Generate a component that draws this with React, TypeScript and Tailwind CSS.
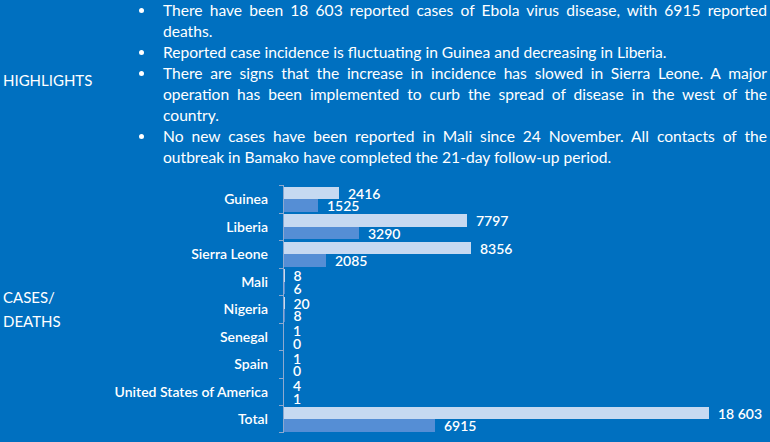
const highlights: string[][] = [
  [
    "There have been 18 603 reported cases of Ebola virus disease, with 6915 reported",
    "deaths.",
  ],
  ["Reported case incidence is fluctuating in Guinea and decreasing in Liberia."],
  [
    "There are signs that the increase in incidence has slowed in Sierra Leone. A major",
    "operation has been implemented to curb the spread of disease in the west of the",
    "country.",
  ],
  [
    "No new cases have been reported in Mali since 24 November. All contacts of the",
    "outbreak in Bamako have completed the 21-day follow-up period.",
  ],
];

// bar lengths in px as drawn in the original chart
const rows = [
  { name: "Guinea", cases: 2416, deaths: 1525, cw: 55, dw: 34 },
  { name: "Liberia", cases: 7797, deaths: 3290, cw: 183, dw: 75 },
  { name: "Sierra Leone", cases: 8356, deaths: 2085, cw: 187, dw: 42 },
  { name: "Mali", cases: 8, deaths: 6, cw: 0.5, dw: 0.5 },
  { name: "Nigeria", cases: 20, deaths: 8, cw: 0.5, dw: 0.5 },
  { name: "Senegal", cases: 1, deaths: 0, cw: 0, dw: 0 },
  { name: "Spain", cases: 1, deaths: 0, cw: 0, dw: 0 },
  { name: "United States of America", cases: 4, deaths: 1, cw: 0, dw: 0 },
  { name: "Total", cases: 18603, deaths: 6915, cw: 425, dw: 151 },
];

function fmt(n: number) {
  return n >= 10000 ? n.toLocaleString("en-US").replace(",", " ") : String(n);
}

function Bar({ value, width, light }: { value: number; width: number; light?: boolean }) {
  return (
    <div className="flex h-[12.5px] items-center">
      <div
        className={light ? "h-full bg-[#c6d9f1]" : "h-full bg-[#558ed5]"}
        style={{ width }}
      />
      <span className="ml-[9px] pt-[2px] text-[14px] font-semibold leading-[12px] text-white">
        {fmt(value)}
      </span>
    </div>
  );
}

export default function App() {
  return (
    <div
      className="h-[442px] w-[770px] overflow-hidden bg-[#0070c0] text-white"
      style={{ fontFamily: 'Lato, "Liberation Sans", sans-serif' }}
    >
      <div className="flex h-[168px]">
        <div className="w-[139px] pl-[3px] pt-[70px] text-[15px] leading-[21px]">HIGHLIGHTS</div>
        <ul className="w-[628px] text-[15.6px] leading-[21px]">
          {highlights.map((lines, i) => (
            <li key={i} className="flex">
              <div className="w-[24px] shrink-0 pt-[8px]">
                <div className="h-[5px] w-[5px] rounded-full bg-white" />
              </div>
              <div className="flex-1">
                {lines.map((line, j) => (
                  <div
                    key={j}
                    className={
                      j < lines.length - 1 ? "text-justify [text-align-last:justify]" : "text-left"
                    }
                  >
                    {line}
                  </div>
                ))}
              </div>
            </li>
          ))}
        </ul>
      </div>

      <div className="mt-[17px] flex">
        <div className="flex w-[100px] items-center pl-[3px] text-[15px] leading-[24px]">
          <div>
            CASES/
            <br />
            DEATHS
          </div>
        </div>
        <div>
          {rows.map((r, i) => (
            <div key={r.name} className="flex h-[27.5px]">
              <div className="mr-[11px] flex w-[168px] items-center justify-end text-[14px] font-semibold">
                {r.name}
              </div>
              <div
                className={
                  i === rows.length - 1
                    ? "w-[4px] border-y border-[#8ea9cf]"
                    : "w-[4px] border-t border-[#8ea9cf]"
                }
              />
              <div className="flex flex-col border-l border-[#8ea9cf] pt-[1.5px]">
                <Bar value={r.cases} width={r.cw} light />
                <Bar value={r.deaths} width={r.dw} />
              </div>
            </div>
          ))}
        </div>
      </div>
    </div>
  );
}
